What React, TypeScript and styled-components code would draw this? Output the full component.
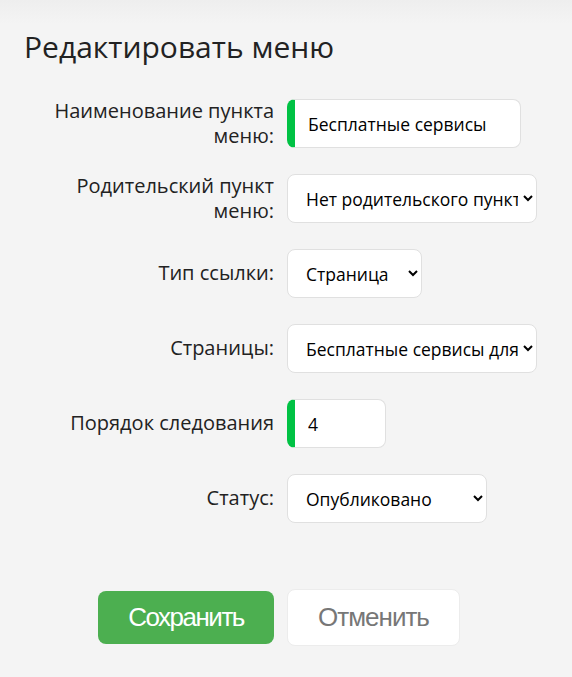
import { createGlobalStyle } from "styled-components";
import styled from "styled-components";

const GlobalStyle = createGlobalStyle`
	html, body {
		margin: 0;
		padding: 0;
		background: #f4f4f4;
	}
	body {
		font-family: "Open Sans", "Liberation Sans", sans-serif;
		color: #222;
	}
`;

type Field = {
	label: string;
	kind: "input" | "select";
	value: string;
	width: number;
	required?: boolean;
};

const fields: Field[] = [
	{ label: "Наименование пункта меню:", kind: "input", value: "Бесплатные сервисы", width: 234, required: true },
	{ label: "Родительский пункт меню:", kind: "select", value: "Нет родительского пункта", width: 250 },
	{ label: "Тип ссылки:", kind: "select", value: "Страница", width: 135 },
	{ label: "Страницы:", kind: "select", value: "Бесплатные сервисы для бизнеса", width: 250 },
	{ label: "Порядок следования", kind: "input", value: "4", width: 99, required: true },
	{ label: "Статус:", kind: "select", value: "Опубликовано", width: 200 },
];

function App() {
	return (
		<>
			<GlobalStyle />
			<StPage>
				<StTitle>Редактировать меню</StTitle>
				<StForm>
					{fields.map((f) => (
						<StRow key={f.label}>
							<StLabel>{f.label}</StLabel>
							{f.kind === "input" ? (
								<StInput $width={f.width} $required={f.required} defaultValue={f.value} />
							) : (
								<StSelect $width={f.width} defaultValue={f.value}>
									<option>{f.value}</option>
								</StSelect>
							)}
						</StRow>
					))}
					<StActions>
						<StSaveButton type="button">Сохранить</StSaveButton>
						<StCancelButton type="button">Отменить</StCancelButton>
					</StActions>
				</StForm>
			</StPage>
		</>
	);
}

export default App;

const StPage = styled.div`
	min-height: 677px;
	box-sizing: border-box;
	padding: 27px 0 0 24px;
	background: linear-gradient(#eeeeee, #f4f4f4 24px);
`;

const StTitle = styled.h1`
	margin: 0 0 32px 0;
	font-size: 30px;
	font-weight: 400;
	line-height: 40px;
	color: #222;
`;

const StForm = styled.form`
	display: grid;
	grid-template-columns: 230px auto;
	column-gap: 13px;
	row-gap: 26px;
	padding-left: 20px;
`;

const StRow = styled.div`
	display: contents;
`;

const StLabel = styled.label`
	align-self: center;
	text-align: right;
	font-size: 20px;
	line-height: 24.5px;
	color: #222;
`;

const StInput = styled.input<{ $width: number; $required?: boolean }>`
	width: ${(p) => p.$width}px;
	height: 49px;
	box-sizing: border-box;
	border: 1px solid #e0e0e0;
	border-left: ${(p) => (p.$required ? "8px solid #00c244" : "1px solid #e0e0e0")};
	border-radius: 8px;
	background: #fff;
	padding: 0 0 0 ${(p) => (p.$required ? "13px" : "16px")};
	font-family: "Open Sans", sans-serif;
	font-size: 17.5px;
	color: #000;
	outline: none;
`;

const StSelect = styled.select<{ $width: number }>`
	width: ${(p) => p.$width}px;
	height: 49px;
	box-sizing: border-box;
	border: 1px solid #e0e0e0;
	border-radius: 8px;
	background: #fff;
	padding: 0 2px 0 14px;
	font-family: "Open Sans", sans-serif;
	font-size: 17.5px;
	color: #000;
	outline: none;
`;

const StActions = styled.div`
	grid-column: 1 / 3;
	display: grid;
	grid-template-columns: 230px auto;
	column-gap: 13px;
	align-items: center;
	margin-top: 40px;
`;

const StButtonBase = styled.button`
	box-sizing: border-box;
	border-radius: 8px;
	font-family: "Liberation Sans", Arial, sans-serif;
	font-size: 26px;
	cursor: pointer;
`;

const StSaveButton = styled(StButtonBase)`
	justify-self: end;
	width: 176px;
	height: 53px;
	border: none;
	background: #4caf50;
	color: #fff;
	letter-spacing: -1.5px;
`;

const StCancelButton = styled(StButtonBase)`
	justify-self: start;
	width: 173px;
	height: 57px;
	border: 1px solid #ececec;
	background: #fff;
	color: #777;
	letter-spacing: -1px;
`;
